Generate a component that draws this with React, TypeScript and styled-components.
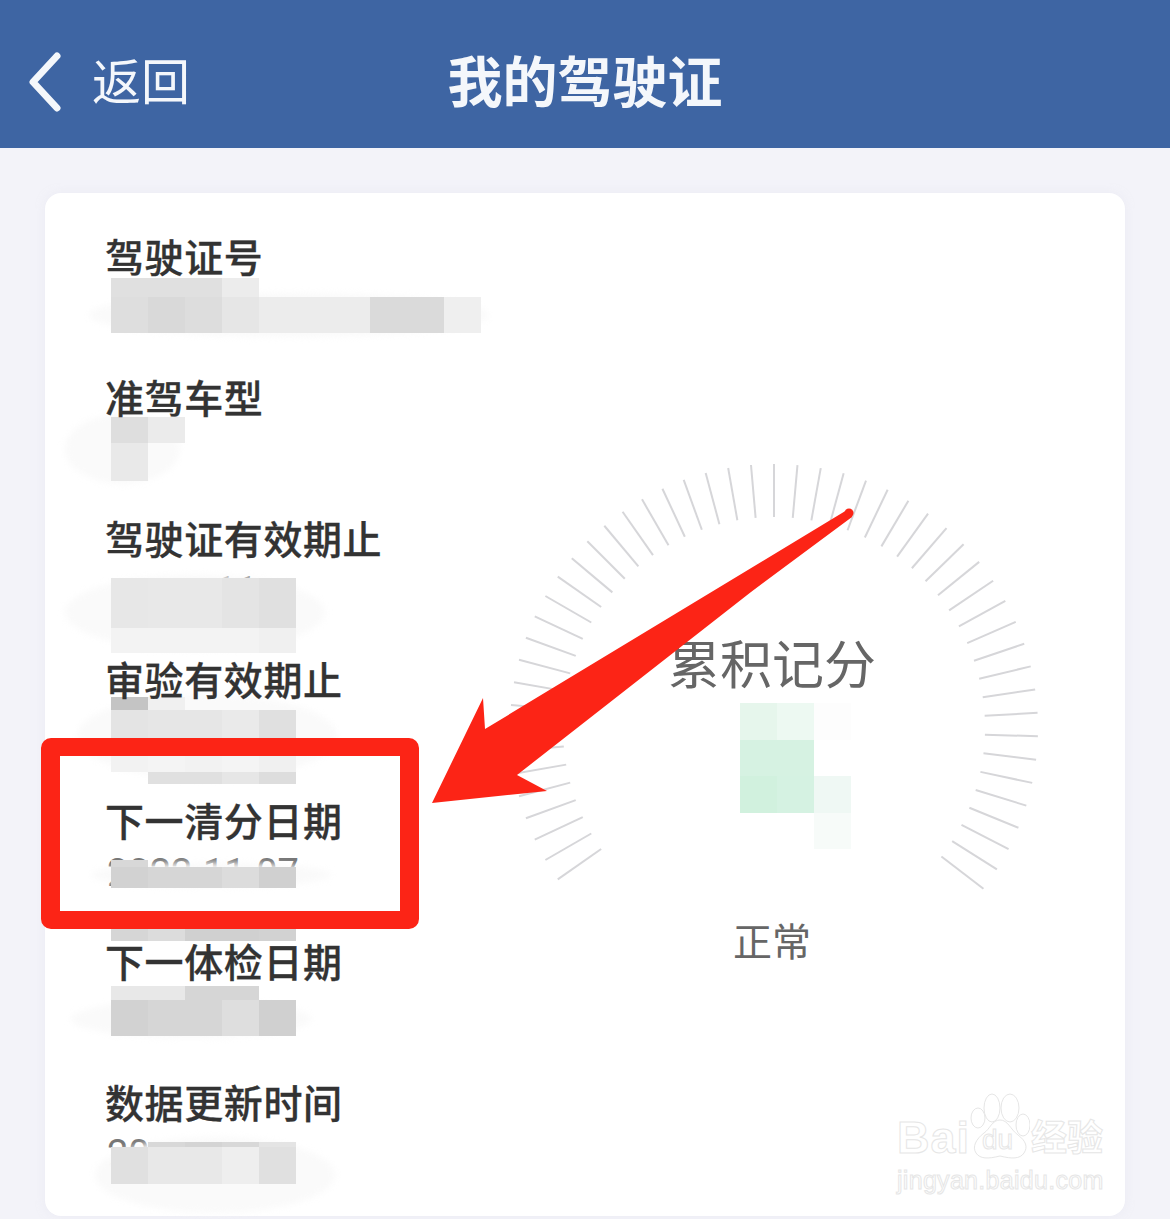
import styled, { createGlobalStyle } from 'styled-components';

const CJK = '"Noto Sans CJK SC", "Noto Sans", sans-serif';
const CELL = 37;

const GlobalStyle = createGlobalStyle`
  html, body {
    margin: 0;
    padding: 0;
    background: #f3f3f9;
    font-family: ${CJK};
  }
`;

const Page = styled.div`
  position: relative;
  width: 1170px;
  height: 1219px;
  overflow: hidden;
  background: #f3f3f9;
`;

const Header = styled.header`
  display: grid;
  grid-template-columns: 1fr auto 1fr;
  align-items: center;
  height: 148px;
  background: #3e65a3;
  color: #f4f7fb;
`;

const BackLink = styled.div`
  display: flex;
  align-items: center;
  gap: 26px;
  padding: 16px 0 0 28px;
  font-size: 49px;
  line-height: 56px;
`;

const BackText = styled.span`
  margin-bottom: 7px;
`;

const Title = styled.h1`
  margin: 0;
  padding-top: 7px;
  font-size: 55px;
  line-height: 64px;
  font-weight: 700;
`;

const Card = styled.main`
  display: flex;
  width: 1080px;
  height: 1023px;
  margin: 45px 0 0 45px;
  background: #fff;
  border-radius: 16px;
  box-shadow: 0 0 8px rgba(230, 230, 240, 0.5);
`;

const InfoList = styled.div`
  width: 449px;
  padding: 39px 0 0 62px;
  box-sizing: border-box;
`;

const InfoRow = styled.div`
  height: 141px;
`;

const Label = styled.div`
  position: relative;
  z-index: 2;
  height: 49px;
  margin-left: -2px;
  font-size: 39px;
  line-height: 46px;
  letter-spacing: 0.6px;
  font-weight: 500;
  color: #333;
  -webkit-text-stroke: 0.3px #333;
  white-space: nowrap;
`;

const Value = styled.div`
  position: relative;
  display: flow-root;
  height: 92px;
`;

const ValueText = styled.div<{ $top: number; $left: number }>`
  position: absolute;
  left: ${({ $left }) => $left}px;
  top: ${({ $top }) => $top}px;
  font-family: Roboto, sans-serif;
  font-size: 38px;
  line-height: 36px;
  color: #777;
  white-space: nowrap;
`;

const Smudge = styled.div<{ $left: number; $top: number; $w: number; $h: number }>`
  position: absolute;
  left: ${({ $left }) => $left}px;
  top: ${({ $top }) => $top}px;
  width: ${({ $w }) => $w}px;
  height: ${({ $h }) => $h}px;
  border-radius: 50%;
  background: #fafafa;
  filter: blur(3px);
`;

const Mosaic = styled.div<{ $top: number; $left: number }>`
  position: relative;
  display: flex;
  flex-direction: column;
  margin: ${({ $top }) => $top}px 0 0 ${({ $left }) => $left}px;
`;

const MosaicRow = styled.div<{ $h: number }>`
  display: flex;
  height: ${({ $h }) => $h}px;
`;

const MosaicCell = styled.div<{ $color: string }>`
  flex: none;
  width: ${CELL}px;
  background: ${({ $color }) => $color};
`;

const GaugePanel = styled.section`
  position: relative;
  width: 560px;
  height: 560px;
  margin-top: 255px;
`;

const GaugeContent = styled.div`
  position: absolute;
  inset: 0;
  display: flex;
  flex-direction: column;
  align-items: center;
  padding: 184px 4px 0 0;
  box-sizing: border-box;
  color: #666;
`;

const GaugeTitle = styled.div`
  font-size: 52px;
  line-height: 60px;
`;

const GaugeStatus = styled.div`
  margin-top: 68px;
  font-size: 39px;
  line-height: 44px;
`;

const HighlightFrame = styled.div`
  position: absolute;
  left: 41px;
  top: 738px;
  width: 378px;
  height: 191px;
  box-sizing: border-box;
  border: solid #fc2416;
  border-width: 18px 19px;
  border-radius: 10px;
`;

const ArrowLayer = styled.svg`
  position: absolute;
  left: 0;
  top: 0;
`;

const Watermark = styled.div`
  position: absolute;
  left: 897px;
  top: 1093px;
  width: 210px;
  display: flex;
  flex-direction: column;
  color: transparent;
  -webkit-text-stroke: 1px #e6e6e6;
  font-family: "Liberation Sans", sans-serif;
`;

const LogoLine = styled.div`
  display: flex;
  align-items: flex-end;
  height: 67px;
`;

const LogoWord = styled.span`
  font-size: 45px;
  line-height: 44px;
  font-weight: 700;
  letter-spacing: 1px;
`;

const Paw = styled.div`
  position: relative;
  width: 60px;
  height: 67px;
`;

const PawText = styled.span`
  position: absolute;
  left: 12px;
  bottom: 5px;
  font-size: 28px;
  line-height: 30px;
`;

const LogoCjk = styled.span`
  margin-left: 1px;
  font-family: ${CJK};
  font-size: 36px;
  line-height: 50px;
  font-weight: 700;
`;

const SiteLine = styled.div`
  margin-top: 7px;
  font-size: 25px;
  line-height: 26px;
  letter-spacing: 0.3px;
  white-space: nowrap;
`;

type Block = { h: number; cells: string[] };

type Info = {
  label: string;
  text?: string;
  textTop?: number;
  textLeft?: number;
  top: number;
  smudge: [number, number, number, number];
  blocks: Block[];
};

const NONE = 'transparent';

const infos: Info[] = [
  {
    label: '驾驶证号',
    top: -3,
    smudge: [-18, 12, 400, 44],
    blocks: [
      { h: 19, cells: ['#e0e0e0', '#e0e0e0', '#e0e0e0', '#ececec'] },
      {
        h: 36,
        cells: ['#dedede', '#d9d9d9', '#dddddd', '#e6e6e6', '#ececec', '#ececec', '#ececec', '#dadada', '#dadada', '#efefef'],
      },
    ],
  },
  {
    label: '准驾车型',
    top: -5,
    smudge: [-42, -8, 115, 70],
    blocks: [
      { h: 26, cells: ['#dedede', '#ebebeb'] },
      { h: 38, cells: ['#e9e9e9'] },
    ],
  },
  {
    label: '驾驶证有效期止',
    text: '11',
    textTop: 10,
    textLeft: 108,
    top: 15,
    smudge: [-42, 12, 260, 75],
    blocks: [
      { h: 50, cells: ['#e7e7e7', '#e8e8e8', '#e8e8e8', '#e4e4e4', '#e0e0e0'] },
      { h: 25, cells: ['#f3f3f3', '#f3f3f3', '#f3f3f3', '#f3f3f3', '#f0f0f0'] },
    ],
  },
  {
    label: '审验有效期止',
    top: -7,
    smudge: [-30, -10, 260, 85],
    blocks: [
      { h: 13, cells: ['#c4c4c4', '#f0f0f0'] },
      { h: 28, cells: ['#e4e4e4', '#e6e6e6', '#e6e6e6', '#eaeaea', '#e0e0e0'] },
      { h: 34, cells: ['#f2f2f2', '#f4f4f4', '#f2f2f2', '#f4f4f4', '#f0f0f0'] },
      { h: 12, cells: [NONE, '#e0e0e0', '#e0e0e0', '#e6e6e6', '#dddddd'] },
    ],
  },
  {
    label: '下一清分日期',
    text: '2022-11-07',
    textTop: 10,
    top: 15,
    smudge: [-16, 18, 240, 24],
    blocks: [
      { h: 7, cells: ['#d8d8d8'] },
      { h: 21, cells: ['#d2d2d2', '#d6d6d6', '#d6d6d6', '#dcdcdc', '#d0d0d0'] },
      { h: 41, cells: [NONE] },
      { h: 12, cells: ['#d6d6d6', '#dcdcdc', '#d0d0d0', '#d0d0d0', '#d2d2d2'] },
    ],
  },
  {
    label: '下一体检日期',
    top: 0,
    smudge: [-36, 14, 240, 38],
    blocks: [
      { h: 14, cells: ['#e8e8e8', '#e8e8e8', '#d6d6d6', '#d6d6d6'] },
      { h: 36, cells: ['#d2d2d2', '#d6d6d6', '#d6d6d6', '#dedede', '#d0d0d0'] },
    ],
  },
  {
    label: '数据更新时间',
    text: '20',
    textTop: 9,
    top: 15,
    smudge: [-12, 10, 240, 76],
    blocks: [
      { h: 5, cells: [NONE, '#d8d8d8', '#d4d4d4', '#d8d8d8', '#e4e4e4'] },
      { h: 37, cells: ['#e0e0e0', '#e8e8e8', '#e8e8e8', '#eeeeee', '#e0e0e0'] },
    ],
  },
];

const scoreBlocks: Block[] = [
  { h: 37, cells: ['#e6f6ec', '#edf9f2', '#fdfdfd'] },
  { h: 36, cells: ['#d6f2e2', '#d6f2e2', '#ffffff'] },
  { h: 37, cells: ['#d1f1de', '#d5f2e2', '#eff8f4'] },
  { h: 36, cells: [NONE, NONE, '#f7fbf9'] },
];

const CX = 280;
const CY = 280;
// left half of the dial is a bit tighter than the right half
const tickAngles = Array.from({ length: 51 }, (_, i) => {
  const k = 25 - i;
  return 90 + k * (k > 0 ? 5 : 5.1);
});

function MosaicBlocks({ blocks, top, left }: { blocks: Block[]; top: number; left: number }) {
  return (
    <Mosaic $top={top} $left={left}>
      {blocks.map((block, i) => (
        <MosaicRow key={i} $h={block.h}>
          {block.cells.map((color, j) => (
            <MosaicCell key={j} $color={color} />
          ))}
        </MosaicRow>
      ))}
    </Mosaic>
  );
}

function GaugeTicks() {
  return (
    <svg width="560" height="560" viewBox="0 0 560 560">
      {tickAngles.map((deg) => {
        const rad = (deg * Math.PI) / 180;
        return (
          <line
            key={deg}
            x1={CX + 211 * Math.cos(rad)}
            y1={CY - 211 * Math.sin(rad)}
            x2={CX + 264 * Math.cos(rad)}
            y2={CY - 264 * Math.sin(rad)}
            stroke="#d6d6d9"
            strokeWidth="2"
          />
        );
      })}
    </svg>
  );
}

export default function App() {
  return (
    <Page>
      <GlobalStyle />
      <Header>
        <BackLink>
          <svg width="38" height="60" viewBox="0 0 38 60">
            <path d="M29 4 L5 30 L29 56" fill="none" stroke="#f4f7fb" strokeWidth="7" strokeLinecap="round" strokeLinejoin="round" />
          </svg>
          <BackText>返回</BackText>
        </BackLink>
        <Title>我的驾驶证</Title>
      </Header>

      <Card>
        <InfoList>
          {infos.map((info) => (
            <InfoRow key={info.label}>
              <Label>{info.label}</Label>
              <Value>
                {info.text && (
                  <ValueText $top={info.textTop ?? 0} $left={info.textLeft ?? 0}>
                    {info.text}
                  </ValueText>
                )}
                <Smudge $left={info.smudge[0]} $top={info.smudge[1]} $w={info.smudge[2]} $h={info.smudge[3]} />
                <MosaicBlocks blocks={info.blocks} top={info.top} left={4} />
              </Value>
            </InfoRow>
          ))}
        </InfoList>

        <GaugePanel>
          <GaugeTicks />
          <GaugeContent>
            <GaugeTitle>累积记分</GaugeTitle>
            <MosaicBlocks blocks={scoreBlocks} top={11} left={46} />
            <GaugeStatus>正常</GaugeStatus>
          </GaugeContent>
        </GaugePanel>
      </Card>

      <Watermark>
        <LogoLine>
          <LogoWord>Bai</LogoWord>
          <Paw>
            <svg width="60" height="67" viewBox="0 0 60 67" fill="#fff" stroke="#e6e6e6" strokeWidth="1">
              <ellipse cx="8" cy="25" rx="7" ry="10" />
              <ellipse cx="22" cy="15" rx="8" ry="14" />
              <ellipse cx="40" cy="15" rx="9" ry="14" />
              <ellipse cx="53" cy="32" rx="7" ry="11" />
              <path d="M30 27 C38 27 40 36 48 42 C56 48 58 54 54 60 C50 66 42 66 30 63 C18 66 10 66 6 60 C2 54 6 46 14 40 C20 36 22 27 30 27Z" />
            </svg>
            <PawText>du</PawText>
          </Paw>
          <LogoCjk>经验</LogoCjk>
        </LogoLine>
        <SiteLine>jingyan.baidu.com</SiteLine>
      </Watermark>

      <HighlightFrame />
      <ArrowLayer width="1170" height="1219" viewBox="0 0 1170 1219">
        <path d="M847 510 L485 729 L483 698 L432 803 L547 791 L517 775 L751 592 L852 517 Z" fill="#fc2416" />
        <circle cx="849" cy="513" r="4.5" fill="#fc2416" />
      </ArrowLayer>
    </Page>
  );
}
